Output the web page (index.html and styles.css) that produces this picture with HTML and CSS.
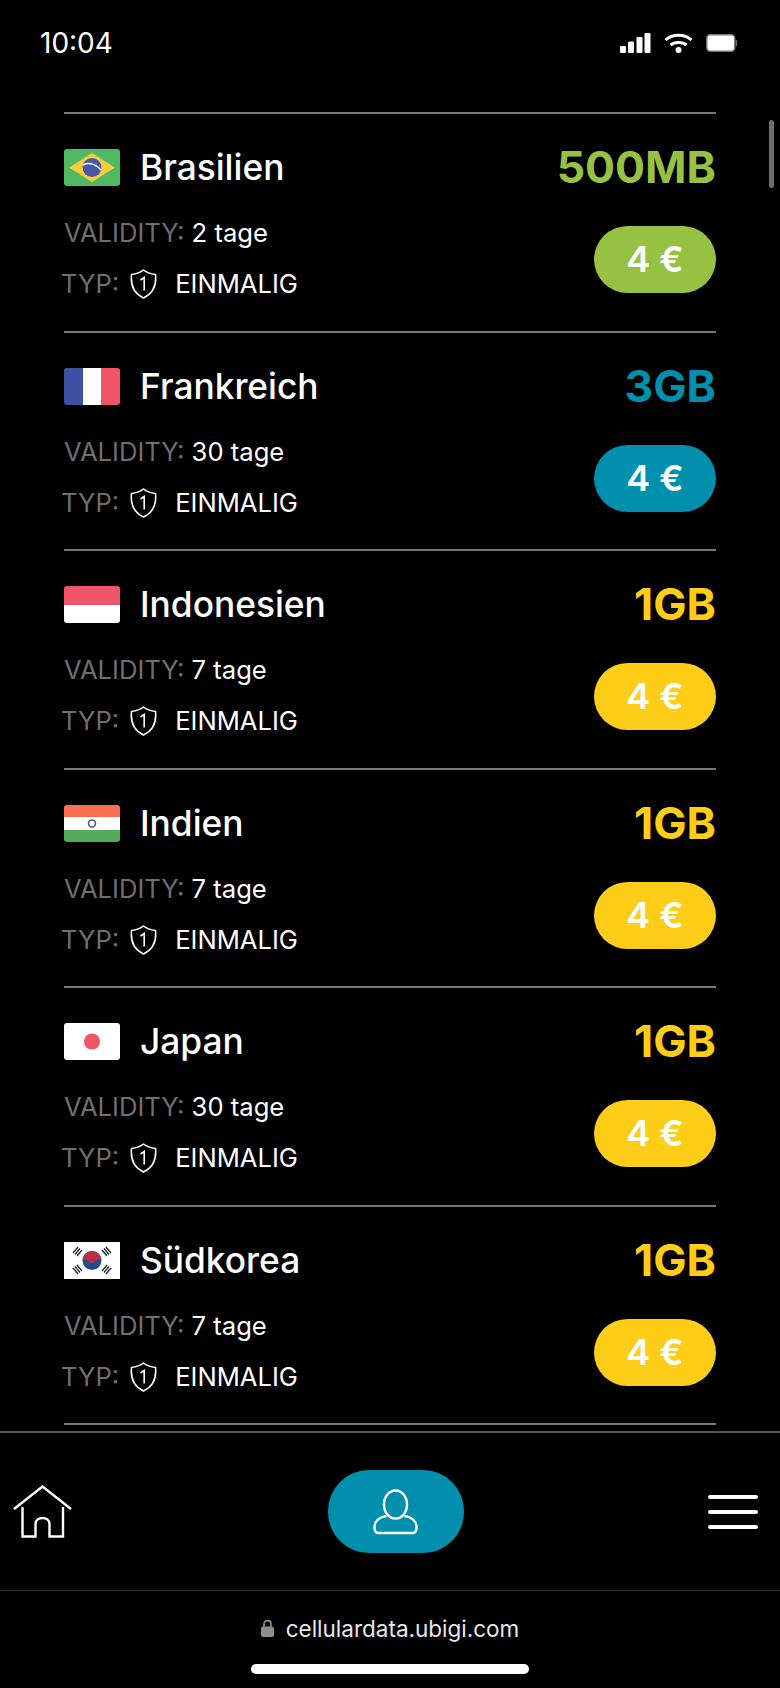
FILE: index.html
```html
<!DOCTYPE html>
<html lang="de">

<head>
    <meta charset="UTF-8">
    <meta name="viewport" content="width=device-width, initial-scale=1.0">
    <title>Ubigi</title>
    <link rel="stylesheet" href="styles.css">
</head>

<body>
    <svg class="defs" width="0" height="0">
        <symbol id="shield" viewBox="0 0 27 30">
            <path d="M13.5 1 C16.5 3.5 21 5 25.5 5.5 C26.5 15 24 24 13.5 29 C3 24 .5 15 1.5 5.5 C6 5 10.5 3.5 13.5 1 Z" fill="none" stroke="#fff" stroke-width="1.6" stroke-linejoin="round" />
            <path d="M10.5 11 L14.2 8.5 V21.5" fill="none" stroke="#fff" stroke-width="1.6" />
        </symbol>
    </svg>

    <div class="status">
        <span class="time">10:04</span>
        <div class="status-icons">
            <svg width="31" height="20" viewBox="0 0 31 20" fill="#fff">
                <rect x="0" y="13" width="6" height="7" rx="1.2" />
                <rect x="8" y="8.5" width="6" height="11.5" rx="1.2" />
                <rect x="16.5" y="4" width="6" height="16" rx="1.2" />
                <rect x="24.5" y="0" width="6" height="20" rx="1.2" />
            </svg>
            <svg width="29" height="20" viewBox="0 0 29 20" fill="none" stroke="#fff" stroke-width="3">
                <path d="M1.5 7 C8.5 .5 20.5 .5 27.5 7" />
                <path d="M6.5 12 C10.5 8.5 18.5 8.5 22.5 12" />
                <circle cx="14.5" cy="17" r="3" fill="#fff" stroke="none" />
            </svg>
            <svg width="31" height="18" viewBox="0 0 31 18">
                <rect x=".75" y=".75" width="28" height="16.5" rx="3.5" fill="#fff" stroke="#777" stroke-width="1.5" />
                <rect x="29.8" y="6" width="1.2" height="6" rx=".6" fill="#777" />
            </svg>
        </div>
    </div>

    <div class="list">
        <div class="plan">
            <div class="plan-head">
                <div class="country">
                    <svg class="flag" viewBox="0 0 56 37">
                        <rect width="56" height="37" rx="3" fill="#4fb862" />
                        <path d="M28 4 L51 18.5 L28 33 L5 18.5 Z" fill="#f5cd3c" />
                        <circle cx="28" cy="18.5" r="9.5" fill="#4a58ab" />
                        <path d="M19 16 C25 13 32 15 37 21" fill="none" stroke="#fff" stroke-width="1.5" />
                    </svg>
                    <span class="name">Brasilien</span>
                </div>
                <span class="amount green-text">500MB</span>
            </div>
            <div class="plan-body">
                <div class="details">
                    <div class="validity"><span class="label">VALIDITY:</span> 2 tage</div>
                    <div class="type">
                        <span class="label">TYP:</span>
                        <svg class="shield"><use href="#shield" /></svg>
                        <span>EINMALIG</span>
                    </div>
                </div>
                <div class="price green">4 €</div>
            </div>
        </div>

        <div class="plan">
            <div class="plan-head">
                <div class="country">
                    <svg class="flag" viewBox="0 0 56 37">
                        <clipPath id="fr"><rect width="56" height="37" rx="3" /></clipPath>
                        <g clip-path="url(#fr)">
                            <rect width="19" height="37" fill="#3f51a3" />
                            <rect x="19" width="18" height="37" fill="#fff" />
                            <rect x="37" width="19" height="37" fill="#ef5467" />
                        </g>
                    </svg>
                    <span class="name">Frankreich</span>
                </div>
                <span class="amount teal-text">3GB</span>
            </div>
            <div class="plan-body">
                <div class="details">
                    <div class="validity"><span class="label">VALIDITY:</span> 30 tage</div>
                    <div class="type">
                        <span class="label">TYP:</span>
                        <svg class="shield"><use href="#shield" /></svg>
                        <span>EINMALIG</span>
                    </div>
                </div>
                <div class="price teal">4 €</div>
            </div>
        </div>

        <div class="plan">
            <div class="plan-head">
                <div class="country">
                    <svg class="flag" viewBox="0 0 56 37">
                        <clipPath id="id"><rect width="56" height="37" rx="3" /></clipPath>
                        <g clip-path="url(#id)">
                            <rect width="56" height="19" fill="#ef5467" />
                            <rect y="19" width="56" height="18" fill="#fff" />
                        </g>
                    </svg>
                    <span class="name">Indonesien</span>
                </div>
                <span class="amount yellow-text">1GB</span>
            </div>
            <div class="plan-body">
                <div class="details">
                    <div class="validity"><span class="label">VALIDITY:</span> 7 tage</div>
                    <div class="type">
                        <span class="label">TYP:</span>
                        <svg class="shield"><use href="#shield" /></svg>
                        <span>EINMALIG</span>
                    </div>
                </div>
                <div class="price yellow">4 €</div>
            </div>
        </div>

        <div class="plan">
            <div class="plan-head">
                <div class="country">
                    <svg class="flag" viewBox="0 0 56 37">
                        <clipPath id="in"><rect width="56" height="37" rx="3" /></clipPath>
                        <g clip-path="url(#in)">
                            <rect width="56" height="12" fill="#fb6f50" />
                            <rect y="12" width="56" height="13" fill="#fff" />
                            <rect y="25" width="56" height="12" fill="#55a85c" />
                        </g>
                        <circle cx="28" cy="18.5" r="3.5" fill="none" stroke="#4a5590" stroke-width="1.6" />
                    </svg>
                    <span class="name">Indien</span>
                </div>
                <span class="amount yellow-text">1GB</span>
            </div>
            <div class="plan-body">
                <div class="details">
                    <div class="validity"><span class="label">VALIDITY:</span> 7 tage</div>
                    <div class="type">
                        <span class="label">TYP:</span>
                        <svg class="shield"><use href="#shield" /></svg>
                        <span>EINMALIG</span>
                    </div>
                </div>
                <div class="price yellow">4 €</div>
            </div>
        </div>

        <div class="plan">
            <div class="plan-head">
                <div class="country">
                    <svg class="flag" viewBox="0 0 56 37">
                        <rect width="56" height="37" rx="3" fill="#fff" />
                        <circle cx="28" cy="18.5" r="8" fill="#ef5467" />
                    </svg>
                    <span class="name">Japan</span>
                </div>
                <span class="amount yellow-text">1GB</span>
            </div>
            <div class="plan-body">
                <div class="details">
                    <div class="validity"><span class="label">VALIDITY:</span> 30 tage</div>
                    <div class="type">
                        <span class="label">TYP:</span>
                        <svg class="shield"><use href="#shield" /></svg>
                        <span>EINMALIG</span>
                    </div>
                </div>
                <div class="price yellow">4 €</div>
            </div>
        </div>

        <div class="plan">
            <div class="plan-head">
                <div class="country">
                    <svg class="flag" viewBox="0 0 56 37">
                        <rect width="56" height="37" fill="#fff" />
                        <circle cx="28" cy="18.5" r="9.5" fill="#1d4f86" />
                        <path d="M18.5 18.5 A9.5 9.5 0 0 1 37.5 18.5 C33 15 31 21 28 21 C24 21 23 15 18.5 18.5 Z" fill="#b82f48" />
                        <g stroke="#222" stroke-width="1.3">
                            <path d="M9 11 L14 5 M11 12.5 L16 6.5 M13 14 L18 8" />
                            <path d="M38 8 L43 14 M40 6.5 L45 12.5 M42 5 L47 11" />
                            <path d="M9 26 L14 32 M11 24.5 L16 30.5 M13 23 L18 29" />
                            <path d="M38 29 L43 23 M40 30.5 L45 24.5 M42 32 L47 26" />
                        </g>
                    </svg>
                    <span class="name">Südkorea</span>
                </div>
                <span class="amount yellow-text">1GB</span>
            </div>
            <div class="plan-body">
                <div class="details">
                    <div class="validity"><span class="label">VALIDITY:</span> 7 tage</div>
                    <div class="type">
                        <span class="label">TYP:</span>
                        <svg class="shield"><use href="#shield" /></svg>
                        <span>EINMALIG</span>
                    </div>
                </div>
                <div class="price yellow">4 €</div>
            </div>
        </div>
        <div class="plan"></div>
    </div>

    <div class="scrollbar"></div>

    <div class="nav">
        <svg class="home" viewBox="0 0 59 53" fill="none" stroke="#fff" stroke-width="2.4">
            <path d="M1 24 L29.5 1.5 L58 24" />
            <path d="M9.5 22 V51.5 H22.5 V39 C22.5 31 36.5 31 36.5 39 V51.5 H50 V22" />
        </svg>
        <div class="account">
            <svg width="46" height="46" viewBox="0 0 46 46" fill="none" stroke="#fff" stroke-width="2.4">
                <ellipse cx="22.5" cy="15.5" rx="11.5" ry="14" />
                <path d="M13.5 27 C6.5 28 1.5 32 1.5 38 C1.5 42 2.5 44 5 44 H40 C42.5 44 43.5 42 43.5 38 C43.5 32 38.5 28 31.5 27" />
            </svg>
        </div>
        <div class="burger">
            <span></span>
            <span></span>
            <span></span>
        </div>
    </div>

    <div class="urlbar">
        <div class="url">
            <svg width="13" height="18" viewBox="0 0 13 18">
                <path d="M3 8 V5 C3 .5 10 .5 10 5 V8" fill="none" stroke="#8e8e8e" stroke-width="1.6" />
                <rect y="7.5" width="13" height="10.5" rx="2" fill="#8e8e8e" />
            </svg>
            <span>cellulardata.ubigi.com</span>
        </div>
        <div class="home-bar"></div>
    </div>
</body>

</html>
```

FILE: styles.css
```css
* {
    box-sizing: border-box;
}

body {
    display: flex;
    flex-direction: column;
    position: relative;
    width: 780px;
    height: 1688px;
    margin: 0;
    overflow: hidden;
    background-color: #000;
    color: #fff;
    font-family: Inter, "Liberation Sans", sans-serif;
}

.defs {
    position: absolute;
}

.status {
    display: flex;
    justify-content: space-between;
    align-items: center;
    height: 86px;
    padding: 0 43px 0 40px;
}

.time {
    font-size: 28px;
}

.status-icons {
    display: flex;
    align-items: center;
    gap: 13px;
}

.list {
    flex: 1;
    min-height: 0;
    overflow: hidden;
    margin-top: 26px;
    padding: 0 64px;
}

.plan {
    height: 218.5px;
    border-top: 2px solid #777;
}

.plan-head {
    display: flex;
    justify-content: space-between;
    align-items: center;
    padding-top: 35px;
}

.country {
    display: flex;
    align-items: center;
    gap: 20px;
}

.flag {
    width: 56px;
    height: 37px;
}

.name {
    font-size: 35.3px;
    font-weight: 500;
    line-height: 37px;
}

.amount {
    font-size: 44.5px;
    font-weight: 700;
    line-height: 37px;
}

.green-text {
    color: #97c143;
}

.teal-text {
    color: #0090ad;
}

.yellow-text {
    color: #fdcd17;
}

.plan-body {
    display: flex;
    justify-content: space-between;
    padding-top: 2px;
}

.details {
    padding-top: 27px;
    font-size: 25.6px;
}

.validity {
    line-height: 36px;
}

.type {
    display: flex;
    align-items: center;
    gap: 11px;
    margin: 15px 0 0 -3px;
    line-height: 36px;
}

.label {
    color: #6f6f6f;
}

.shield {
    width: 27px;
    height: 30px;
    margin-right: 7px;
}

.price {
    width: 122px;
    height: 67px;
    margin-top: 38px;
    border-radius: 33.5px;
    font-size: 36px;
    font-weight: 600;
    line-height: 67px;
    text-align: center;
}

.green {
    background-color: #97c143;
}

.teal {
    background-color: #0090ad;
}

.yellow {
    background-color: #fdcd17;
}

.scrollbar {
    position: absolute;
    top: 120px;
    left: 769px;
    width: 5px;
    height: 68px;
    border-radius: 3px;
    background-color: #6e6e6e;
}

.nav {
    display: flex;
    justify-content: space-between;
    align-items: center;
    height: 160px;
    padding: 0 22px 0 13px;
    border-top: 2px solid #555;
    border-bottom: 1px solid #333;
}

.home {
    width: 59px;
    height: 53px;
}

.account {
    display: flex;
    justify-content: center;
    align-items: center;
    width: 136px;
    height: 83px;
    margin-left: 11px;
    border-radius: 41px;
    background-color: #0090ad;
}

.burger {
    display: flex;
    flex-direction: column;
    gap: 11px;
    width: 50px;
}

.burger span {
    height: 4px;
    border-radius: 2px;
    background-color: #fff;
}

.urlbar {
    display: flex;
    flex-direction: column;
    align-items: center;
    height: 97px;
    padding-top: 21px;
}

.url {
    display: flex;
    align-items: center;
    gap: 12px;
    height: 32px;
    font-size: 22.5px;
    color: #e8e8e8;
}

.home-bar {
    width: 278px;
    height: 10px;
    margin-top: 20px;
    border-radius: 5px;
    background-color: #fff;
}
```
